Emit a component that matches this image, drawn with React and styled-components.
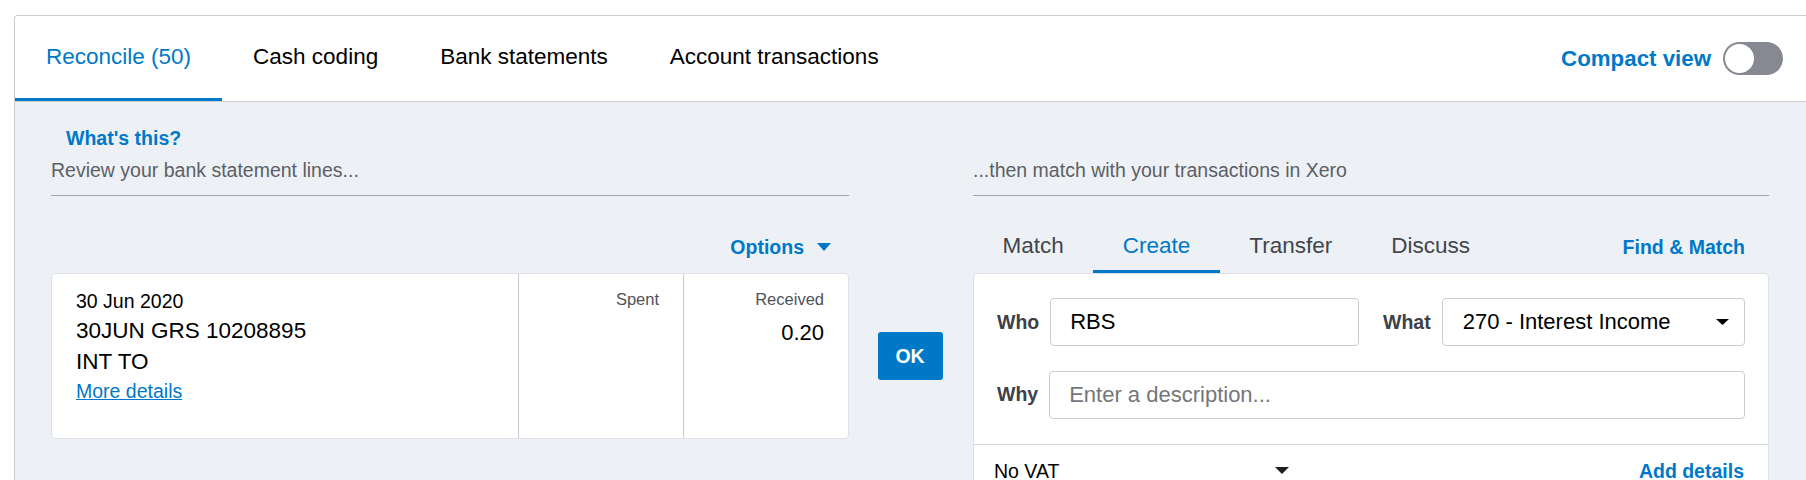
import React from "react";
import styled, { createGlobalStyle, css } from "styled-components";

const GlobalStyle = createGlobalStyle`
  html, body { margin: 0; padding: 0; background: #ffffff; overflow: hidden; }
  body { font-family: "Liberation Sans", Arial, Helvetica, sans-serif; color: #000; }
  * { box-sizing: border-box; }
`;

const BLUE = "#0078c8";

const Shell = styled.div`
  margin: 15px 0 0 14px;
  min-height: calc(100vh - 15px);
  border: 1px solid #cccccc;
  border-right: none;
  border-bottom: none;
  border-top-left-radius: 4px;
  background: #edf1f5;
  overflow: hidden;
`;

const TopBar = styled.div`
  display: flex;
  align-items: stretch;
  height: 86px;
  background: #ffffff;
  border-bottom: 1px solid #cccccc;
  padding-right: 23px;
`;

const TopTab = styled.div`
  display: flex;
  align-items: center;
  height: 85px;
  padding: 0 31px;
  font-size: 22.5px;
  color: ${(p) => (p.$active ? BLUE : "#000000")};
  border-bottom: 3px solid ${(p) => (p.$active ? BLUE : "transparent")};
  white-space: nowrap;
`;

const Spacer = styled.div`
  flex: 1;
`;

const CompactWrap = styled.div`
  display: flex;
  align-items: center;
  gap: 12px;
  color: ${BLUE};
  font-weight: 700;
  font-size: 22.3px;
`;

const Switch = styled.div`
  position: relative;
  width: 60px;
  height: 33px;
  border-radius: 17px;
  background: #868991;
`;

const Knob = styled.span`
  position: absolute;
  left: 2px;
  top: 2px;
  width: 29px;
  height: 29px;
  border-radius: 50%;
  background: #ffffff;
`;

const Workspace = styled.div`
  display: grid;
  grid-template-columns: 798px 124px 796px;
  grid-template-rows: auto 77px auto;
  padding-left: 36px;
`;

const IntroBlock = styled.div`
  grid-column: ${(p) => p.$col};
  grid-row: 1;
  align-self: end;
  border-bottom: 1px solid #a3a6ab;
  padding-bottom: 11px;
`;

const WhatsThis = styled.div`
  padding: 22px 0 0 15px;
  font-size: 19.5px;
  line-height: 28px;
  font-weight: 700;
  color: ${BLUE};
`;

const IntroText = styled.div`
  margin-top: 4px;
  font-size: 19.5px;
  line-height: 28px;
  color: #5c5f66;
`;

const OptionsRow = styled.div`
  grid-column: 1;
  grid-row: 2;
  align-self: end;
  display: flex;
  justify-content: flex-end;
  align-items: center;
  gap: 13px;
  padding: 0 18px 12px 0;
  font-size: 19.5px;
  line-height: 28px;
  font-weight: 700;
  color: ${BLUE};
`;

const MatchTabs = styled.div`
  grid-column: 3;
  grid-row: 2;
  align-self: end;
  display: flex;
  align-items: flex-end;
`;

const MatchTab = styled.div`
  padding: 0 29.5px 9px;
  font-size: 22.5px;
  line-height: 30px;
  color: ${(p) => (p.$active ? BLUE : "#41454c")};
  border-bottom: 3px solid ${(p) => (p.$active ? BLUE : "transparent")};
`;

const FindMatch = styled.div`
  margin-left: auto;
  padding: 0 24px 12px 0;
  font-size: 19.5px;
  line-height: 28px;
  font-weight: 700;
  color: ${BLUE};
`;

const cardBase = css`
  background: #ffffff;
  border: 1px solid #dde1e6;
  border-radius: 4px;
`;

const StatementCard = styled.div`
  ${cardBase};
  grid-column: 1;
  grid-row: 3;
  display: flex;
  height: 166px;
`;

const StatementMain = styled.div`
  flex: 1;
  padding: 13px 24px 0;
`;

const DateLine = styled.div`
  font-size: 19.5px;
  line-height: 29px;
  color: #000;
`;

const DescLine = styled.div`
  font-size: 22.5px;
  line-height: 30.5px;
  color: #000;
`;

const MoreLink = styled.a`
  display: block;
  font-size: 19.5px;
  line-height: 28px;
  color: ${BLUE};
  text-decoration: underline;
`;

const AmountCol = styled.div`
  width: 165px;
  border-left: 1px solid #c8cacd;
  padding: 13px 24px 0 0;
  text-align: right;
`;

const AmountHead = styled.div`
  font-size: 16.5px;
  line-height: 24px;
  color: #4f5259;
`;

const Amount = styled.div`
  margin-top: 7px;
  font-size: 22px;
  line-height: 30px;
  color: #000;
`;

const OkCol = styled.div`
  grid-column: 2;
  grid-row: 3;
  display: flex;
  align-items: center;
  justify-content: center;
  height: 166px;
  padding-right: 2px;
`;

const OkButton = styled.button`
  width: 65px;
  height: 48px;
  border: none;
  border-radius: 3px;
  background: ${BLUE};
  color: #ffffff;
  font-family: inherit;
  font-size: 19.5px;
  font-weight: 700;
  padding: 0;
`;

const MatchCard = styled.div`
  ${cardBase};
  grid-column: 3;
  grid-row: 3;
`;

const Form = styled.div`
  display: flex;
  flex-direction: column;
  gap: 24.5px;
  padding: 24px 23px 25px;
`;

const FormRow = styled.div`
  display: flex;
  gap: 24px;
`;

const Field = styled.label`
  flex: 1 1 0;
  min-width: 0;
  display: flex;
  align-items: center;
  gap: 11px;
`;

const FieldLabel = styled.span`
  flex: none;
  font-size: 19.5px;
  font-weight: 700;
  color: #3d4047;
`;

const TextInput = styled.input`
  flex: 1 1 0;
  width: 0;
  min-width: 0;
  height: 48px;
  border: 1px solid #c9ccd1;
  border-radius: 4px;
  padding: 0 19px;
  font-family: inherit;
  font-size: 22px;
  color: #000;
  background: #fff;
  outline: none;
  &::placeholder { color: #74767a; }
`;

const SelectBox = styled.div`
  flex: 1 1 0;
  min-width: 0;
  display: flex;
  align-items: center;
  justify-content: space-between;
  height: 48px;
  border: 1px solid #c9ccd1;
  border-radius: 4px;
  padding: 0 15px 0 20px;
  font-size: 22px;
  color: #000;
  white-space: nowrap;
`;

const Footer = styled.div`
  display: flex;
  align-items: center;
  justify-content: space-between;
  border-top: 1px solid #d5d8dc;
  padding: 12px 24px 12px 20px;
  font-size: 19.5px;
  line-height: 28px;
`;

const VatSelect = styled.div`
  width: 295px;
  display: flex;
  align-items: center;
  justify-content: space-between;
  color: #000;
`;

const AddDetails = styled.div`
  font-weight: 700;
  color: ${BLUE};
`;

const Caret = ({ w, h, color }) => (
  <svg width={w} height={h} viewBox={`0 0 ${w} ${h}`} aria-hidden="true">
    <polygon points={`0,0 ${w},0 ${w / 2},${h}`} fill={color} />
  </svg>
);

export default function App() {
  return (
    <>
      <GlobalStyle />
      <Shell>
        <TopBar>
          <TopTab $active>Reconcile (50)</TopTab>
          <TopTab>Cash coding</TopTab>
          <TopTab>Bank statements</TopTab>
          <TopTab>Account transactions</TopTab>
          <Spacer />
          <CompactWrap>
            Compact view
            <Switch>
              <Knob />
            </Switch>
          </CompactWrap>
        </TopBar>

        <Workspace>
          <IntroBlock $col={1}>
            <WhatsThis>What's this?</WhatsThis>
            <IntroText>Review your bank statement lines...</IntroText>
          </IntroBlock>
          <IntroBlock $col={3}>
            <IntroText>...then match with your transactions in Xero</IntroText>
          </IntroBlock>

          <OptionsRow>
            Options
            <Caret w={14} h={8} color={BLUE} />
          </OptionsRow>

          <MatchTabs>
            <MatchTab>Match</MatchTab>
            <MatchTab $active>Create</MatchTab>
            <MatchTab>Transfer</MatchTab>
            <MatchTab>Discuss</MatchTab>
            <FindMatch>Find &amp; Match</FindMatch>
          </MatchTabs>

          <StatementCard>
            <StatementMain>
              <DateLine>30 Jun 2020</DateLine>
              <DescLine>30JUN GRS 10208895</DescLine>
              <DescLine>INT TO</DescLine>
              <MoreLink href="#">More details</MoreLink>
            </StatementMain>
            <AmountCol>
              <AmountHead>Spent</AmountHead>
            </AmountCol>
            <AmountCol>
              <AmountHead>Received</AmountHead>
              <Amount>0.20</Amount>
            </AmountCol>
          </StatementCard>

          <OkCol>
            <OkButton>OK</OkButton>
          </OkCol>

          <MatchCard>
            <Form>
              <FormRow>
                <Field>
                  <FieldLabel>Who</FieldLabel>
                  <TextInput readOnly defaultValue="RBS" />
                </Field>
                <Field>
                  <FieldLabel>What</FieldLabel>
                  <SelectBox>
                    270 - Interest Income
                    <Caret w={13} h={6} color="#000" />
                  </SelectBox>
                </Field>
              </FormRow>
              <FormRow>
                <Field>
                  <FieldLabel>Why</FieldLabel>
                  <TextInput readOnly placeholder="Enter a description..." />
                </Field>
              </FormRow>
            </Form>
            <Footer>
              <VatSelect>
                No VAT
                <Caret w={14} h={7} color="#1e1e1e" />
              </VatSelect>
              <AddDetails>Add details</AddDetails>
            </Footer>
          </MatchCard>
        </Workspace>
      </Shell>
    </>
  );
}
